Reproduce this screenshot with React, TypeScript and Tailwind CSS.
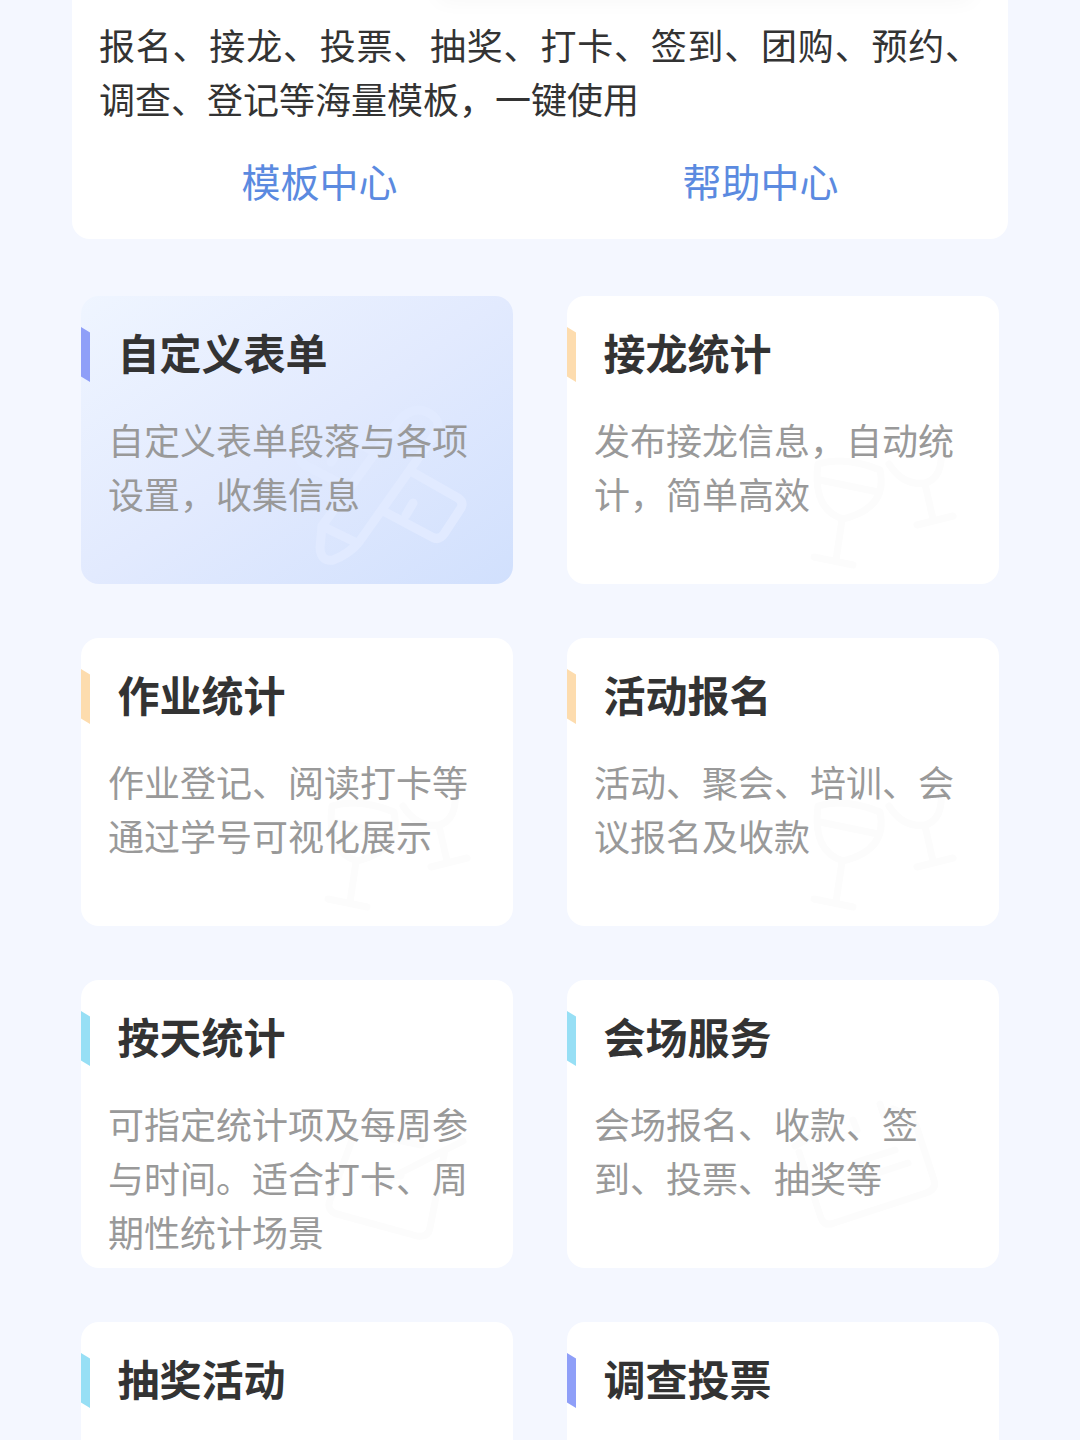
import type { ReactNode } from "react";
import clsx from "clsx";

type Accent = "blue" | "orange" | "cyan";

interface Feature {
  title: string;
  desc?: string;
  accent: Accent;
  active?: boolean;
  mark?: ReactNode;
}

const ACCENTS: Record<Accent, string> = {
  blue: "bg-[#8f9ff8]",
  orange: "bg-[#fddcae]",
  cyan: "bg-[#97dff5]",
};

// Watermarks share the 432x288 card space.
function Watermark({ color, width, children }: { color: string; width: number; children: ReactNode }) {
  return (
    <svg
      viewBox="0 0 432 288"
      className="pointer-events-none absolute inset-0 h-full w-full"
      fill="none"
      stroke={color}
      strokeWidth={width}
      strokeLinecap="round"
      strokeLinejoin="round"
    >
      {children}
    </svg>
  );
}

function PencilRulerMark() {
  return (
    <Watermark color="#e1eaff" width={9}>
      <path d="M316 127 Q330 109 346 116 Q362 124 355 137 L278 246 Q268 258 252 264 Q240 266 239 252 L241 230 Z" />
      <path d="M243 231 L276 247" />
      <path d="M333 177 L377 202 Q383 206 380 212 L363 238 Q358 245 351 241 L304 216" />
      <path d="M332 207 L325 219" />
      <path d="M262 189 L224 169 Q217 164 221 157 L236 134 Q241 127 248 131 L290 154" />
      <path d="M250 166 L257 155" />
    </Watermark>
  );
}

function GlassesMark() {
  return (
    <Watermark color="#fcfcfc" width={7}>
      <path d="M251 168 Q278 160 313 174 Q321 212 276 223 Q245 213 251 168 Z" />
      <path d="M253 184 L311 196" />
      <path d="M275 224 L269 264" />
      <path d="M247 261 L286 269" />
      <path d="M322 168 Q336 190 358 187 Q377 182 374 150" />
      <path d="M358 188 L366 223" />
      <path d="M350 229 L386 220" />
    </Watermark>
  );
}

function NoteMark() {
  return (
    <Watermark color="#fcfcfc" width={7}>
      <path d="M271 160 L249 220 Q245 231 256 234 L336 256 Q347 258 349 248 L364 170" />
      <path d="M271 160 Q273 151 284 153 L340 165" />
      <path d="M292 207 L382 161" />
      <path d="M296 190 L320 196" />
    </Watermark>
  );
}

function TicketMark() {
  return (
    <Watermark color="#fcfcfc" width={7}>
      <path d="M232 172 L254 238 Q258 247 267 243 L359 213 Q370 209 367 200 L349 145" />
      <path d="M228 166 L262 147 M326 129 L347 138" />
      <path d="M292 199 L341 183 M290 182 L328 170" />
      <path d="M286 140 L290 150 M313 124 L317 136" />
    </Watermark>
  );
}

const FEATURES: Feature[] = [
  { title: "自定义表单", desc: "自定义表单段落与各项设置，收集信息", accent: "blue", active: true, mark: <PencilRulerMark /> },
  { title: "接龙统计", desc: "发布接龙信息，自动统计，简单高效", accent: "orange", mark: <GlassesMark /> },
  { title: "作业统计", desc: "作业登记、阅读打卡等通过学号可视化展示", accent: "orange", mark: <GlassesMark /> },
  { title: "活动报名", desc: "活动、聚会、培训、会议报名及收款", accent: "orange", mark: <GlassesMark /> },
  { title: "按天统计", desc: "可指定统计项及每周参与时间。适合打卡、周期性统计场景", accent: "cyan", mark: <NoteMark /> },
  { title: "会场服务", desc: "会场报名、收款、签到、投票、抽奖等", accent: "cyan", mark: <TicketMark /> },
  { title: "抽奖活动", accent: "cyan" },
  { title: "调查投票", accent: "blue" },
];

function FeatureCard({ title, desc, accent, active, mark }: Feature) {
  return (
    <div
      className={clsx(
        "relative h-72 overflow-hidden rounded-[18px]",
        active ? "bg-linear-to-br from-[#eff5ff] via-[#e2eafe] to-[#d1e0fd]" : "bg-white",
      )}
    >
      {mark}
      <div className="relative flex items-start pt-[31px]">
        <span className={clsx("h-[55px] w-[9px] [clip-path:polygon(0_0,100%_10%,100%_100%,0_90%)]", ACCENTS[accent])} />
        <h2 className="ml-[27.5px] text-[42px] leading-[50px] font-bold text-[#333]">{title}</h2>
      </div>
      <p className="relative mt-[30px] px-[27px] text-[36px] leading-[54px] text-[#999]">{desc}</p>
    </div>
  );
}

export default function App() {
  return (
    <div className="h-[1440px] w-[1080px] overflow-hidden bg-[#f4f7ff] font-['Noto_Sans_CJK_SC',sans-serif]">
      <section className="relative mx-[72px] h-[239px] overflow-hidden rounded-b-[18px] bg-white px-[27px] pt-[17px]">
        <div className="absolute -top-5 left-[366px] h-5 w-[534px] shadow-[0_0_22px_rgba(0,0,0,0.04)]" />
        <p className="text-justify text-[36px] leading-[54px] text-[#333]">
          报名、接龙、投票、抽奖、打卡、签到、团购、预约、调查、登记等海量模板，一键使用
        </p>
        <div className="mt-[27px] grid grid-cols-2 text-center text-[39px] leading-[56px] text-[#5b8ae0]">
          <a>模板中心</a>
          <a>帮助中心</a>
        </div>
      </section>
      <main className="grid grid-cols-2 gap-[54px] px-[81px] pt-[57px]">
        {FEATURES.map((f) => (
          <FeatureCard key={f.title} {...f} />
        ))}
      </main>
    </div>
  );
}
